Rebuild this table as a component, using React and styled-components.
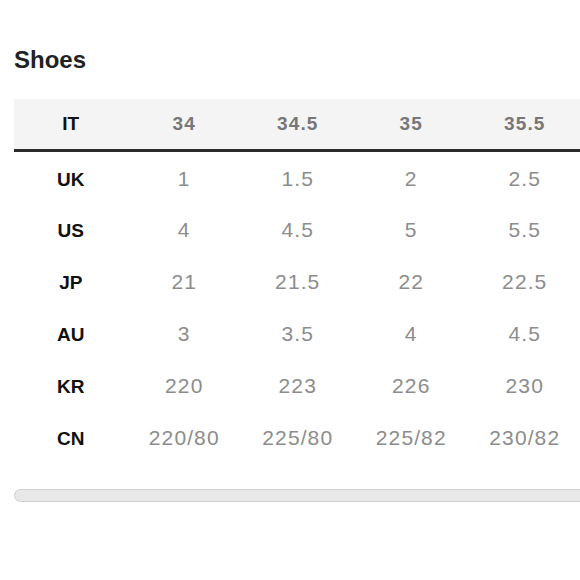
import React from 'react';
import styled, { createGlobalStyle } from 'styled-components';

const GlobalStyle = createGlobalStyle`
  html, body {
    margin: 0;
    padding: 0;
    background: #ffffff;
    overflow: hidden;
  }
  body {
    font-family: "Liberation Sans", Arial, sans-serif;
  }
`;

const Page = styled.div`
  width: 700px;
  padding: 46px 0 0 14px;
`;

const Title = styled.h2`
  margin: 0 0 25px;
  font-size: 24px;
  line-height: 28px;
  font-weight: 700;
  color: #222222;
`;

const Table = styled.table`
  border-collapse: collapse;
  table-layout: fixed;
  width: 681px;
`;

const HeadRow = styled.tr`
  background: #f4f4f4;
  border-bottom: 3px solid #2b2b2b;
`;

const BodyRow = styled.tr`
  height: 52px;
`;

const HeadCell = styled.th`
  width: 113.5px;
  height: 50px;
  padding: 0;
  line-height: 22px;
  text-align: center;
  font-size: 19px;
  font-weight: 700;
  letter-spacing: ${(p) => (p.$label ? '0' : '1.1px')};
  color: ${(p) => (p.$label ? '#111111' : '#777777')};
`;

const LabelCell = styled.td`
  padding: 5px 0 0;
  line-height: 22px;
  text-align: center;
  font-size: 19px;
  font-weight: 700;
  color: #111111;
`;

const ValueCell = styled.td`
  padding: 3px 0 0;
  line-height: 22px;
  text-align: center;
  font-size: 21px;
  font-weight: 400;
  letter-spacing: 1.1px;
  color: #8c8c8c;
`;

const ScrollTrack = styled.div`
  margin-top: 26px;
  width: 680px;
  height: 13px;
  box-sizing: border-box;
  border: 1px solid #cfcfcf;
  border-radius: 7px;
  background: #e8e8e8;
`;

const sizes = ['34', '34.5', '35', '35.5', '36'];

const rows = [
  { label: 'UK', values: ['1', '1.5', '2', '2.5', '3'] },
  { label: 'US', values: ['4', '4.5', '5', '5.5', '6'] },
  { label: 'JP', values: ['21', '21.5', '22', '22.5', '23'] },
  { label: 'AU', values: ['3', '3.5', '4', '4.5', '5'] },
  { label: 'KR', values: ['220', '223', '226', '230', '233'] },
  { label: 'CN', values: ['220/80', '225/80', '225/82', '230/82', '230/84'] },
];

export default function App() {
  return (
    <Page>
      <GlobalStyle />
      <Title>Shoes</Title>
      <Table>
        <thead>
          <HeadRow>
            <HeadCell $label>IT</HeadCell>
            {sizes.map((s) => (
              <HeadCell key={s}>{s}</HeadCell>
            ))}
          </HeadRow>
        </thead>
        <tbody>
          {rows.map((row) => (
            <BodyRow key={row.label}>
              <LabelCell>{row.label}</LabelCell>
              {row.values.map((v, i) => (
                <ValueCell key={i}>{v}</ValueCell>
              ))}
            </BodyRow>
          ))}
        </tbody>
      </Table>
      <ScrollTrack />
    </Page>
  );
}
